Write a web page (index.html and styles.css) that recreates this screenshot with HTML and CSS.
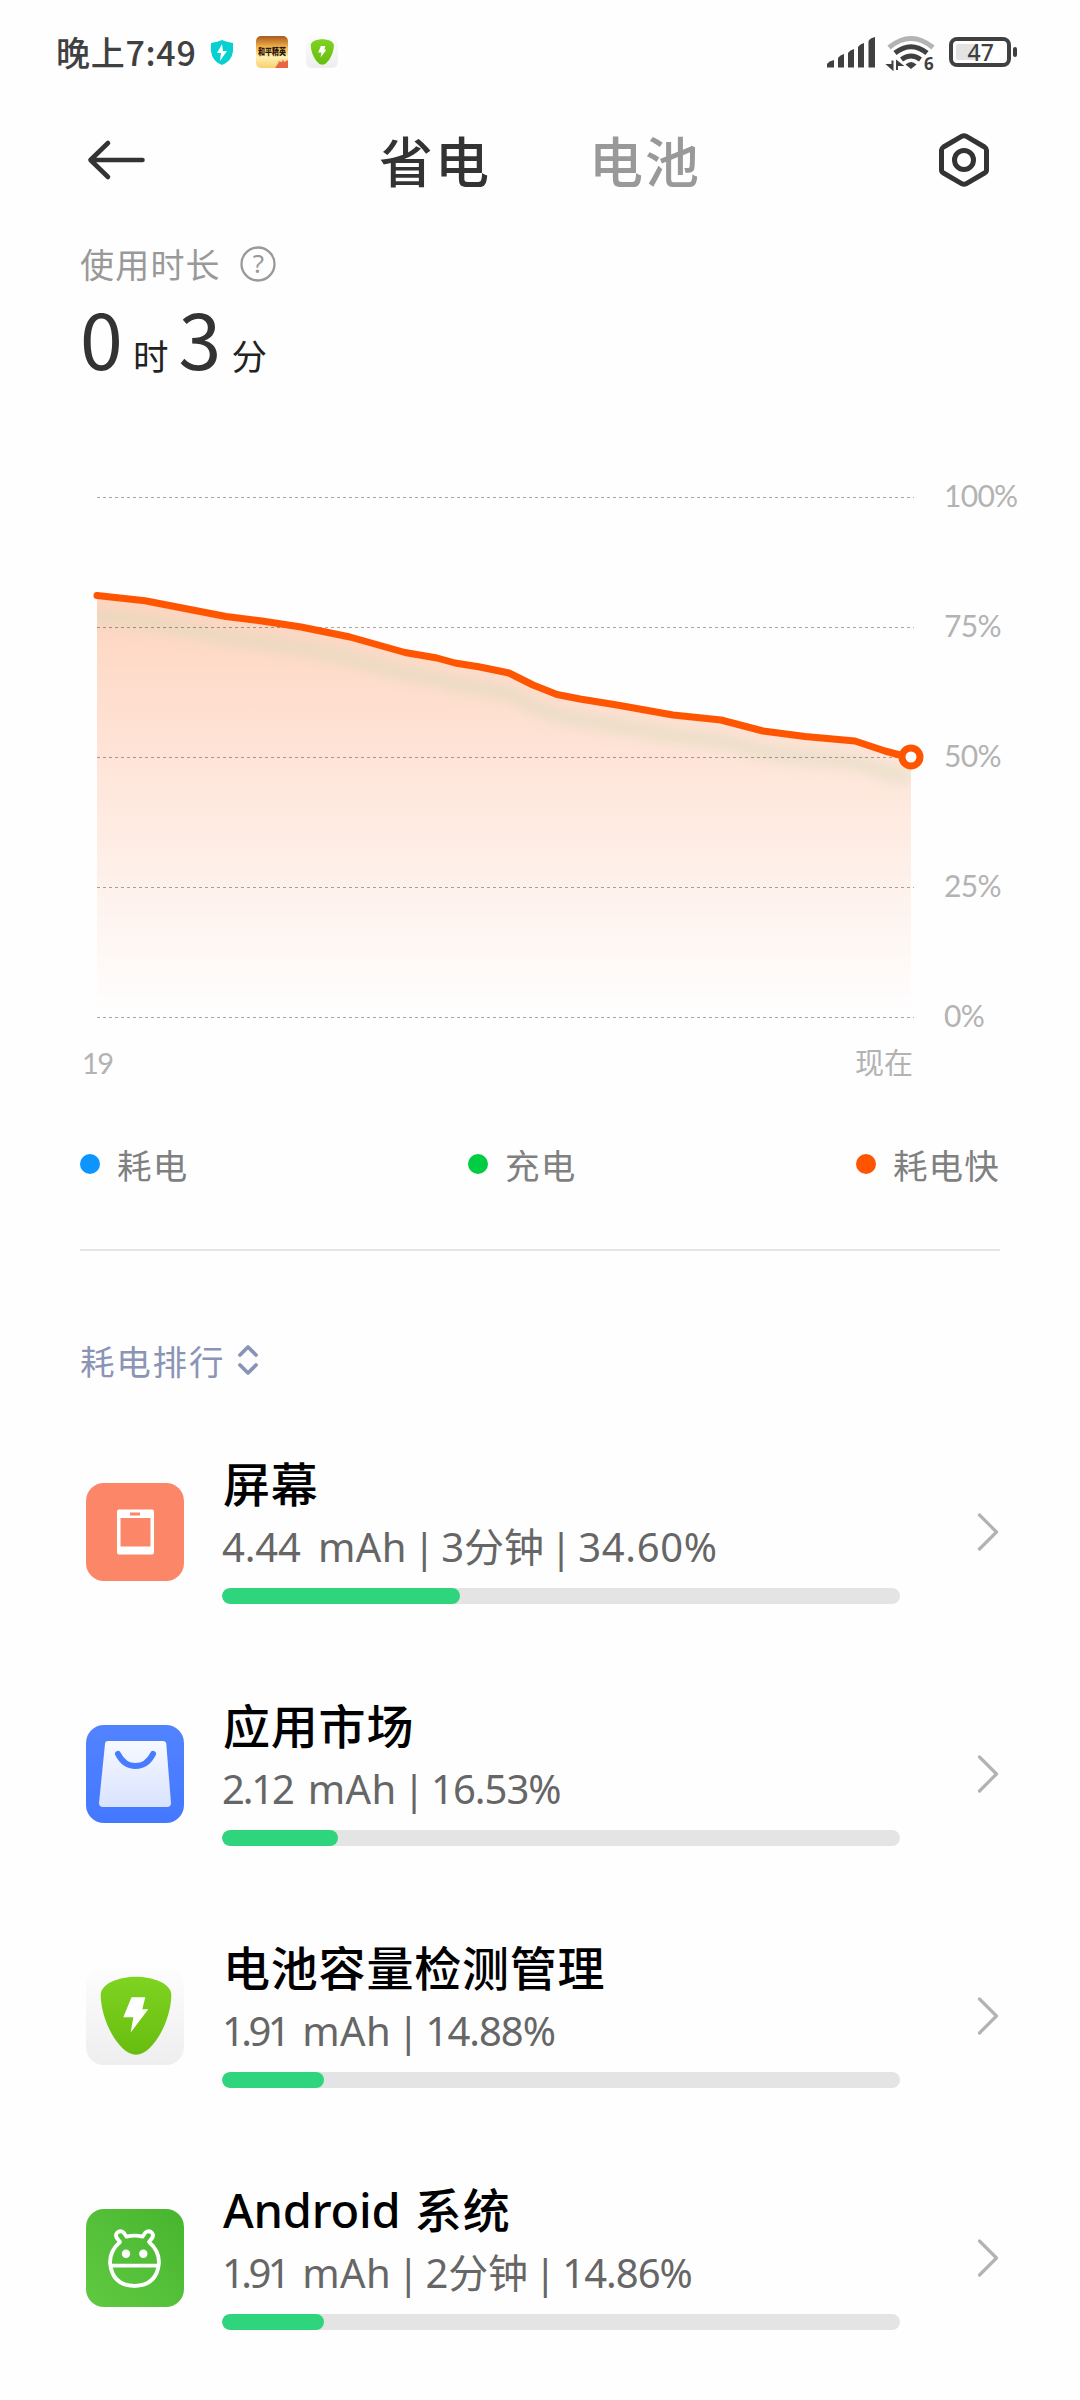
FILE: index.html
```html
<!DOCTYPE html>
<html lang="zh-CN">
<head>
<meta charset="utf-8">
<title>省电</title>
<link rel="stylesheet" href="styles.css">
</head>
<body>
<div class="status">
  <span class="clock">晚上7:49</span>
  <svg class="s1" width="32" height="32" viewBox="0 0 32 32"><path d="M5 7Q12 6 16 4Q20 6 27 7V15Q26 25 16 29Q6 25 5 15Z" fill="#06d0d0"/><path d="M16 8L11 17H15L14 25L21 15H17Z" fill="#fff"/></svg>
  <svg class="s2" width="32" height="32" viewBox="0 0 32 32">
    <defs><linearGradient id="game" x1="0" y1="0" x2="0" y2="1"><stop offset="0" stop-color="#a8591d"/><stop offset=".35" stop-color="#f3b44c"/><stop offset=".65" stop-color="#fff0b0"/><stop offset="1" stop-color="#f8cf70"/></linearGradient></defs>
    <rect width="32" height="32" rx="5" fill="url(#game)"/>
    <text class="gametext" x="2" y="18.500" textLength="28" lengthAdjust="spacingAndGlyphs">和平精英</text>
    <path d="M19 32L23 26L21 25L26 26L27 23L28 26L32 24V32Z" fill="#ea6547"/>
  </svg>
  <svg class="s3" width="32" height="32" viewBox="0 0 98 98"><use href="#shield"/></svg>
  <svg class="sys" width="194" height="40" viewBox="824 30 194 40">
    <g fill="#404040"><path d="M827 67.500V64Q829 61 834 60V67.500ZM838 67.500V58Q840 55 844 54V67.500ZM848 67.500V53Q850 50 854 49V67.500ZM858 67.500V47Q860 44 864 43V67.500ZM868.500 67.500V41Q870 38 875 37V67.500Z"/></g>
    <g fill="none" stroke-width="5"><path d="M889 47.500Q911 29.500 933 47.500" stroke="#b3b3b3"/><path d="M895 53Q911 40.500 927 53M901.500 59.500Q911 52.500 920.500 59.500" stroke="#404040"/></g>
    <path d="M905.500 64.500Q911 59.500 916.500 64.500L911 69Z" fill="#404040"/>
    <path d="M892.500 60.500V69L888 65H892M897 70V61.500L901.500 65H897" fill="#404040" stroke="#404040" stroke-width="2"/>
    <text class="six" x="924" y="69.500">6</text>
    <rect x="951" y="39" width="58" height="26" rx="6" fill="none" stroke="#404040" stroke-width="4"/>
    <rect x="956" y="44" width="22" height="16" rx="2" fill="#e3e3e3"/>
    <rect x="1013" y="47" width="4" height="10" rx="2" fill="#404040"/>
    <text class="pct" x="967.500" y="61">47</text>
  </svg>
</div>
<header class="header">
  <svg class="back" width="60" height="42" viewBox="0 0 60 42" fill="none" stroke="#333" stroke-width="4.600" stroke-linecap="round" stroke-linejoin="round"><path d="M56.500 21H4.500M22 4L4.500 21L22 38"/></svg>
  <span class="tab on">省电</span><span class="tab">电池</span>
  <svg class="gear" width="54" height="58" viewBox="0 0 54 58" fill="none" stroke="#333" stroke-width="5"><path d="M25 5.200Q27 4.200 29 5.200L47.500 16Q49.500 17.300 49.500 19V39Q49.500 41 47.500 42L29 52.800Q27 53.800 25 52.800L6.500 42Q4.500 41 4.500 39V19Q4.500 17.300 6.500 16Z"/><circle cx="27" cy="29" r="9.500"/></svg>
</header>
<section class="usage">
  <div class="label">使用时长
    <svg width="38" height="38" viewBox="0 0 38 38"><circle cx="19" cy="19" r="16.500" fill="none" stroke="#999" stroke-width="2.300"/><text class="q" x="19.500" y="28" text-anchor="middle">?</text></svg>
  </div>
  <div class="time"><span class="num">0</span><span class="unit u1">时</span><span class="num">3</span><span class="unit u2">分</span></div>
</section>
<section class="chart">
  <svg class="plot" width="850" height="540" viewBox="80 490 850 540">
    <defs>
      <linearGradient id="area" gradientUnits="userSpaceOnUse" x1="0" y1="595" x2="0" y2="1012"><stop offset="0" stop-color="#ff5500" stop-opacity=".25"/><stop offset="1" stop-color="#ff5500" stop-opacity="0"/></linearGradient>
      <clipPath id="under"><path d="M97 595.500L145 600.700L226 616.500L262 621L301 627L350 637L405 652.500L437 658L455 663L480 667L509 673L533 685L557 694.500L580 699L617 705L645 710L673 715L721 720L763 731L805 736.500L855 741L885 751L911 757.500V1017H97Z"/></clipPath>
      <filter id="soft" filterUnits="userSpaceOnUse" x="60" y="560" width="900" height="280"><feGaussianBlur stdDeviation="6"/></filter>
    </defs>
    <g clip-path="url(#under)">
      <rect x="97" y="590" width="814" height="428" fill="url(#area)"/>
      <path transform="translate(0 21)" d="M80 594L97 595.500L145 600.700L226 616.500L262 621L301 627L350 637L405 652.500L437 658L455 663L480 667L509 673L533 685L557 694.500L580 699L617 705L645 710L673 715L721 720L763 731L805 736.500L855 741L885 751L911 757.500" fill="none" stroke="#d0dab8" stroke-opacity=".4" stroke-width="15" filter="url(#soft)"/>
    </g>
    <path d="M97 497.500H914M97 627.500H914M97 757.500H914M97 887.500H914M97 1017.500H914" stroke="#000" stroke-opacity=".34" stroke-width="1" stroke-dasharray="3 3"/>
    <path d="M97 595.500L145 600.700L226 616.500L262 621L301 627L350 637L405 652.500L437 658L455 663L480 667L509 673L533 685L557 694.500L580 699L617 705L645 710L673 715L721 720L763 731L805 736.500L855 741L885 751L900 755L911 757.500" fill="none" stroke="#ff5500" stroke-width="7" stroke-linecap="round" stroke-linejoin="round"/>
    <circle cx="911" cy="757" r="9" fill="#fff" stroke="#ff5500" stroke-width="7"/>
  </svg>
  <div class="yaxis"><span>100%</span><span>75%</span><span>50%</span><span>25%</span><span>0%</span></div>
  <div class="xaxis"><span class="from">19</span><span>现在</span></div>
</section>
<div class="legend">
  <span class="item"><i class="dot blue"></i>耗电</span>
  <span class="item"><i class="dot green"></i>充电</span>
  <span class="item"><i class="dot orange"></i>耗电快</span>
</div>
<div class="rank">耗电排行
  <svg width="22" height="32" viewBox="0 0 22 32" fill="none" stroke="#8b94b5" stroke-width="3.800" stroke-linecap="round" stroke-linejoin="round"><path d="M3 11L11 3L19 11M3 21L11 29L19 21"/></svg>
</div>
<main class="list">
  <div class="row">
    <svg class="icon" viewBox="0 0 98 98"><rect width="98" height="98" rx="18" fill="#fb8668"/><path fill-rule="evenodd" d="M33 26.500H66Q68 26.500 68 28.500V69.500Q68 71.500 66 71.500H33Q31 71.500 31 69.500V28.500Q31 26.500 33 26.500ZM34.500 35V63.500H64.500V35ZM44 29.500V32.500H54V29.500Z" fill="#fff"/></svg>
    <div class="info"><div class="name">屏幕</div><div class="detail"><span class="t0">4.44</span> <span class="mah">mAh</span><span class="sep"> | </span>3分钟<span class="sep"> | </span><span class="wide">34.60%</span></div><div class="bar"><div class="fill" style="width:238px"></div></div></div>
    <svg class="chev" width="24" height="42" viewBox="0 0 24 42"><path d="M3.500 4L20.500 21L3.500 38"/></svg>
  </div>
  <div class="row">
    <svg class="icon" viewBox="0 0 98 98"><defs><linearGradient id="bg2" x2="0" y2="1"><stop stop-color="#5283ff"/><stop offset="1" stop-color="#4378ff"/></linearGradient><linearGradient id="bag" x2="0" y2="1"><stop stop-color="#f7f9ff"/><stop offset="1" stop-color="#d9e3ff"/></linearGradient></defs><rect width="98" height="98" rx="18" fill="url(#bg2)"/><path d="M22 16H77Q80 16 80.300 19L85 78Q85 82 81 82H17Q13 82 13 78L19 19Q19 16 22 16Z" fill="url(#bag)"/><path d="M32 29Q38 41 49.500 41Q61 41 67 29" fill="none" stroke="#487cff" stroke-width="6" stroke-linecap="round"/></svg>
    <div class="info"><div class="name">应用市场</div><div class="detail"><span class="t2">2.12</span> <span class="mah">mAh</span><span class="sep"> | </span><span class="t1">16.53%</span></div><div class="bar"><div class="fill" style="width:116px"></div></div></div>
    <svg class="chev" width="24" height="42" viewBox="0 0 24 42"><path d="M3.500 4L20.500 21L3.500 38"/></svg>
  </div>
  <div class="row">
    <svg class="icon" viewBox="0 0 98 98"><defs><linearGradient id="bg3" x2="0" y2="1"><stop stop-color="#fdfdfd"/><stop offset="1" stop-color="#eeeeee"/></linearGradient><linearGradient id="leaf" x2="0" y2="1"><stop stop-color="#7fd321"/><stop offset="1" stop-color="#67bd0e"/></linearGradient></defs><g id="shield"><rect width="98" height="98" rx="18" fill="url(#bg3)"/><path d="M50 9.700C66 9.700 85.300 16 85.300 28C85.300 53 67 87.700 50 87.700C33 87.700 14.700 53 14.700 28C14.700 16 34 9.700 50 9.700Z" fill="url(#leaf)"/><path d="M45.500 30.300H59.300L56.300 42.300H62.300L44.700 65.500L47.300 50.300H37.300Z" fill="#fff"/></g></svg>
    <div class="info"><div class="name">电池容量检测管理</div><div class="detail"><span class="t4">1.91</span> <span class="mah">mAh</span><span class="sep"> | </span><span class="t1">14.88%</span></div><div class="bar"><div class="fill" style="width:102px"></div></div></div>
    <svg class="chev" width="24" height="42" viewBox="0 0 24 42"><path d="M3.500 4L20.500 21L3.500 38"/></svg>
  </div>
  <div class="row">
    <svg class="icon" viewBox="0 0 98 98"><defs><linearGradient id="bg4" x1="0" y1="1" x2="1" y2="0"><stop stop-color="#60c942"/><stop offset="1" stop-color="#48b52e"/></linearGradient></defs><rect width="98" height="98" rx="18" fill="url(#bg4)"/><g fill="none" stroke="#fff" stroke-width="3.800" stroke-linejoin="round"><path d="M34 33L30.500 28.500Q29 25 32 23Q35.500 21 38 24L40.500 27.700Q48.500 25.500 56.500 27.700L59 24Q61.500 21 65 23Q68 25 66.500 28.500L63 33Q73 41.500 73 53.500Q71 76.500 48.500 77Q26 76.500 24 53.500Q24 41.500 34 33ZM25 56.700H72"/></g><circle cx="40" cy="44.700" r="4.200" fill="#fff"/><circle cx="57.300" cy="44.700" r="4.200" fill="#fff"/></svg>
    <div class="info"><div class="name"><span class="latin">Android</span> 系统</div><div class="detail"><span class="t4">1.91</span> <span class="mah">mAh</span><span class="sep"> | </span>2分钟<span class="sep"> | </span><span class="t1">14.86%</span></div><div class="bar"><div class="fill" style="width:102px"></div></div></div>
    <svg class="chev" width="24" height="42" viewBox="0 0 24 42"><path d="M3.500 4L20.500 21L3.500 38"/></svg>
  </div>
</main>
</body>
</html>
```
FILE: styles.css
```css
* { box-sizing: border-box; }
body { margin: 0; width: 1080px; height: 2400px; overflow: hidden; background: #fefefe; color: #333; font-family: "Noto Sans CJK SC", sans-serif; }
svg { display: block; flex: none; overflow: visible; }
.status { display: flex; align-items: center; height: 103px; padding-left: 56px; color: #404040; }
.clock { width: 150px; font-size: 34px; font-weight: 500; line-height: 50px; white-space: nowrap; letter-spacing: .7px; }
.s2 { margin-left: 18px; }
.s3 { margin-left: 18px; }
.sys { margin: 0 0 3px 486px; }
.six { font: 700 17px "Noto Sans", sans-serif; fill: #404040; }
.pct { font: 500 23px "Noto Sans", sans-serif; fill: #404040; }
.gametext { font: 900 9px "Noto Sans CJK SC", sans-serif; fill: #2b1608; }
.header { display: flex; align-items: center; height: 114px; padding-left: 86px; }
.tab { font-size: 54px; font-weight: 500; line-height: 80px; color: #999; letter-spacing: 2px; }
.tab.on { margin-left: 233px; margin-right: 98px; color: #333; }
.gear { margin-left: 236px; }
.usage { height: 273px; padding: 21px 0 0 80px; }
.label { display: flex; align-items: center; gap: 18px; height: 51px; font-size: 34px; letter-spacing: 1.2px; color: #999; }
.q { font: 400 26px "Noto Sans", sans-serif; fill: #999; letter-spacing: 0; }
.time { display: flex; align-items: baseline; height: 100px; line-height: 95px; }
.num { width: 43px; font-size: 77px; letter-spacing: -1px; }
.unit { font-size: 35.5px; color: #222; }
.u1 { margin: 0 10px 0 10px; }
.u2 { margin-left: 10px; }
.chart { display: grid; grid-template-columns: 850px 1fr; grid-template-rows: 540px 60px; padding-left: 80px; }
.yaxis { display: flex; flex-direction: column; gap: 90px; padding-left: 14px; margin-top: -15px; font: 400 30px/40px Lato, sans-serif; color: #b3b3b3; letter-spacing: -.7px; }
.xaxis { display: flex; justify-content: space-between; padding: 13px 17px 0 2px; font: 400 29px/40px Lato, "Noto Sans CJK SC", sans-serif; color: #b3b3b3; }
.from { letter-spacing: -1.5px; }
.legend { display: flex; align-items: center; justify-content: space-between; height: 161px; margin: 0 80px; border-bottom: 2px solid #e5e5e5; font-size: 34.5px; color: #808080; letter-spacing: 1.2px; padding-bottom: 11px; }
.item { display: flex; align-items: center; line-height: 50px; }
.dot { width: 20px; height: 20px; border-radius: 50%; margin-right: 17px; }
.blue { background: #0d95ff; }
.green { background: #0c4; }
.orange { background: #f50; }
.rank { display: flex; align-items: center; gap: 12px; height: 160px; padding: 58px 0 0 80px; font-size: 34.5px; letter-spacing: 1.8px; color: #8b94b5; }
.row { display: flex; height: 242px; padding-left: 86px; align-items: center; }
.icon { width: 98px; height: 98px; }
.info { width: 678px; height: 160px; margin-left: 38px; }
.name { height: 66px; margin-top: -3px; padding-left: 1px; font-size: 47px; line-height: 66px; font-weight: 500; color: #000; letter-spacing: .8px; }
.latin { margin-right: 3px; font-family: "Noto Sans", sans-serif; letter-spacing: -.2px; }
.detail { height: 60px; margin-top: 2px; font: 400 40px/60px "Noto Sans", "Noto Sans CJK SC", sans-serif; color: #666; white-space: nowrap; letter-spacing: -.15px; }
.sep { margin: 0 -4px; }
.mah { letter-spacing: .4px; }
.wide { letter-spacing: .7px; }
.t0 { margin-right: 7px; }
.t1 { letter-spacing: -1px; }
.t2 { margin-right: 5px; letter-spacing: -2.2px; }
.t4 { margin-right: 5px; letter-spacing: -3.6px; }
.bar { height: 16px; margin-top: 11px; border-radius: 8px; background: #e4e4e4; overflow: hidden; }
.fill { height: 16px; border-radius: 8px; background: #2fd57d; }
.chev { margin-left: 76px; fill: none; stroke: #b3b3b3; stroke-width: 3.2; stroke-linecap: round; stroke-linejoin: round; }
```
